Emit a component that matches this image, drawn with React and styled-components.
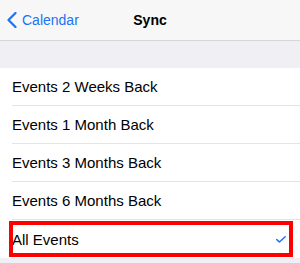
import React from "react";
import styled, { createGlobalStyle } from "styled-components";

const GlobalStyle = createGlobalStyle`
  html, body {
    margin: 0;
    padding: 0;
    background: #efeff4;
    font-family: "Liberation Sans", Arial, sans-serif;
  }
`;

const Screen = styled.div`
  width: 300px;
  height: 263px;
  overflow: hidden;
  background: #efeff4;
`;

const NavBar = styled.div`
  display: grid;
  grid-template-columns: 1fr auto 1fr;
  align-items: center;
  height: 40px;
  background: #f7f7f7;
  border-bottom: 1px solid #d6d6da;
`;

const BackButton = styled.div`
  display: flex;
  align-items: center;
  gap: 5px;
  padding-left: 7px;
  color: #1a73f5;
  font-size: 14px;
`;

const Title = styled.div`
  font-size: 14px;
  font-weight: bold;
  color: #000;
`;

const Spacer = styled.div`
  height: 27px;
`;

const List = styled.div`
  background: #fff;
`;

const Row = styled.div`
  position: relative;
  display: flex;
  align-items: center;
  justify-content: space-between;
  height: 38px;
  margin-left: 12px;
  padding-right: 14px;
  font-size: 15px;
  color: #000;
  border-bottom: ${(p) => (p.$last ? "none" : "1px solid #e4e4e6")};
  box-sizing: border-box;

  ${(p) =>
    p.$highlighted &&
    `
    &::after {
      content: "";
      position: absolute;
      top: 1px;
      bottom: 1px;
      left: -3px;
      right: 7px;
      border: 4px solid #ff0000;
      pointer-events: none;
    }
  `}
`;

const Check = () => (
  <svg width="10" height="7" viewBox="0 0 10 7">
    <polyline
      points="0.8,3.6 3.4,6 9.2,0.8"
      fill="none"
      stroke="#1a73f5"
      strokeWidth="1.5"
      strokeLinecap="round"
      strokeLinejoin="round"
    />
  </svg>
);

const options = [
  { id: 1, label: "Events 2 Weeks Back" },
  { id: 2, label: "Events 1 Month Back" },
  { id: 3, label: "Events 3 Months Back" },
  { id: 4, label: "Events 6 Months Back" },
  { id: 5, label: "All Events", selected: true },
];

const App = () => {
  return (
    <Screen>
      <GlobalStyle />
      <NavBar>
        <BackButton>
          <svg width="10" height="16" viewBox="0 0 10 16">
            <polyline
              points="8.5,1 1.5,8 8.5,15"
              fill="none"
              stroke="#1a73f5"
              strokeWidth="2.2"
              strokeLinecap="round"
              strokeLinejoin="round"
            />
          </svg>
          Calendar
        </BackButton>
        <Title>Sync</Title>
        <div />
      </NavBar>
      <Spacer />
      <List>
        {options.map(({ id, label, selected }, i) => (
          <Row
            key={id}
            $last={i === options.length - 1}
            $highlighted={selected}
          >
            <span>{label}</span>
            {selected && <Check />}
          </Row>
        ))}
      </List>
    </Screen>
  );
};

export default App;
